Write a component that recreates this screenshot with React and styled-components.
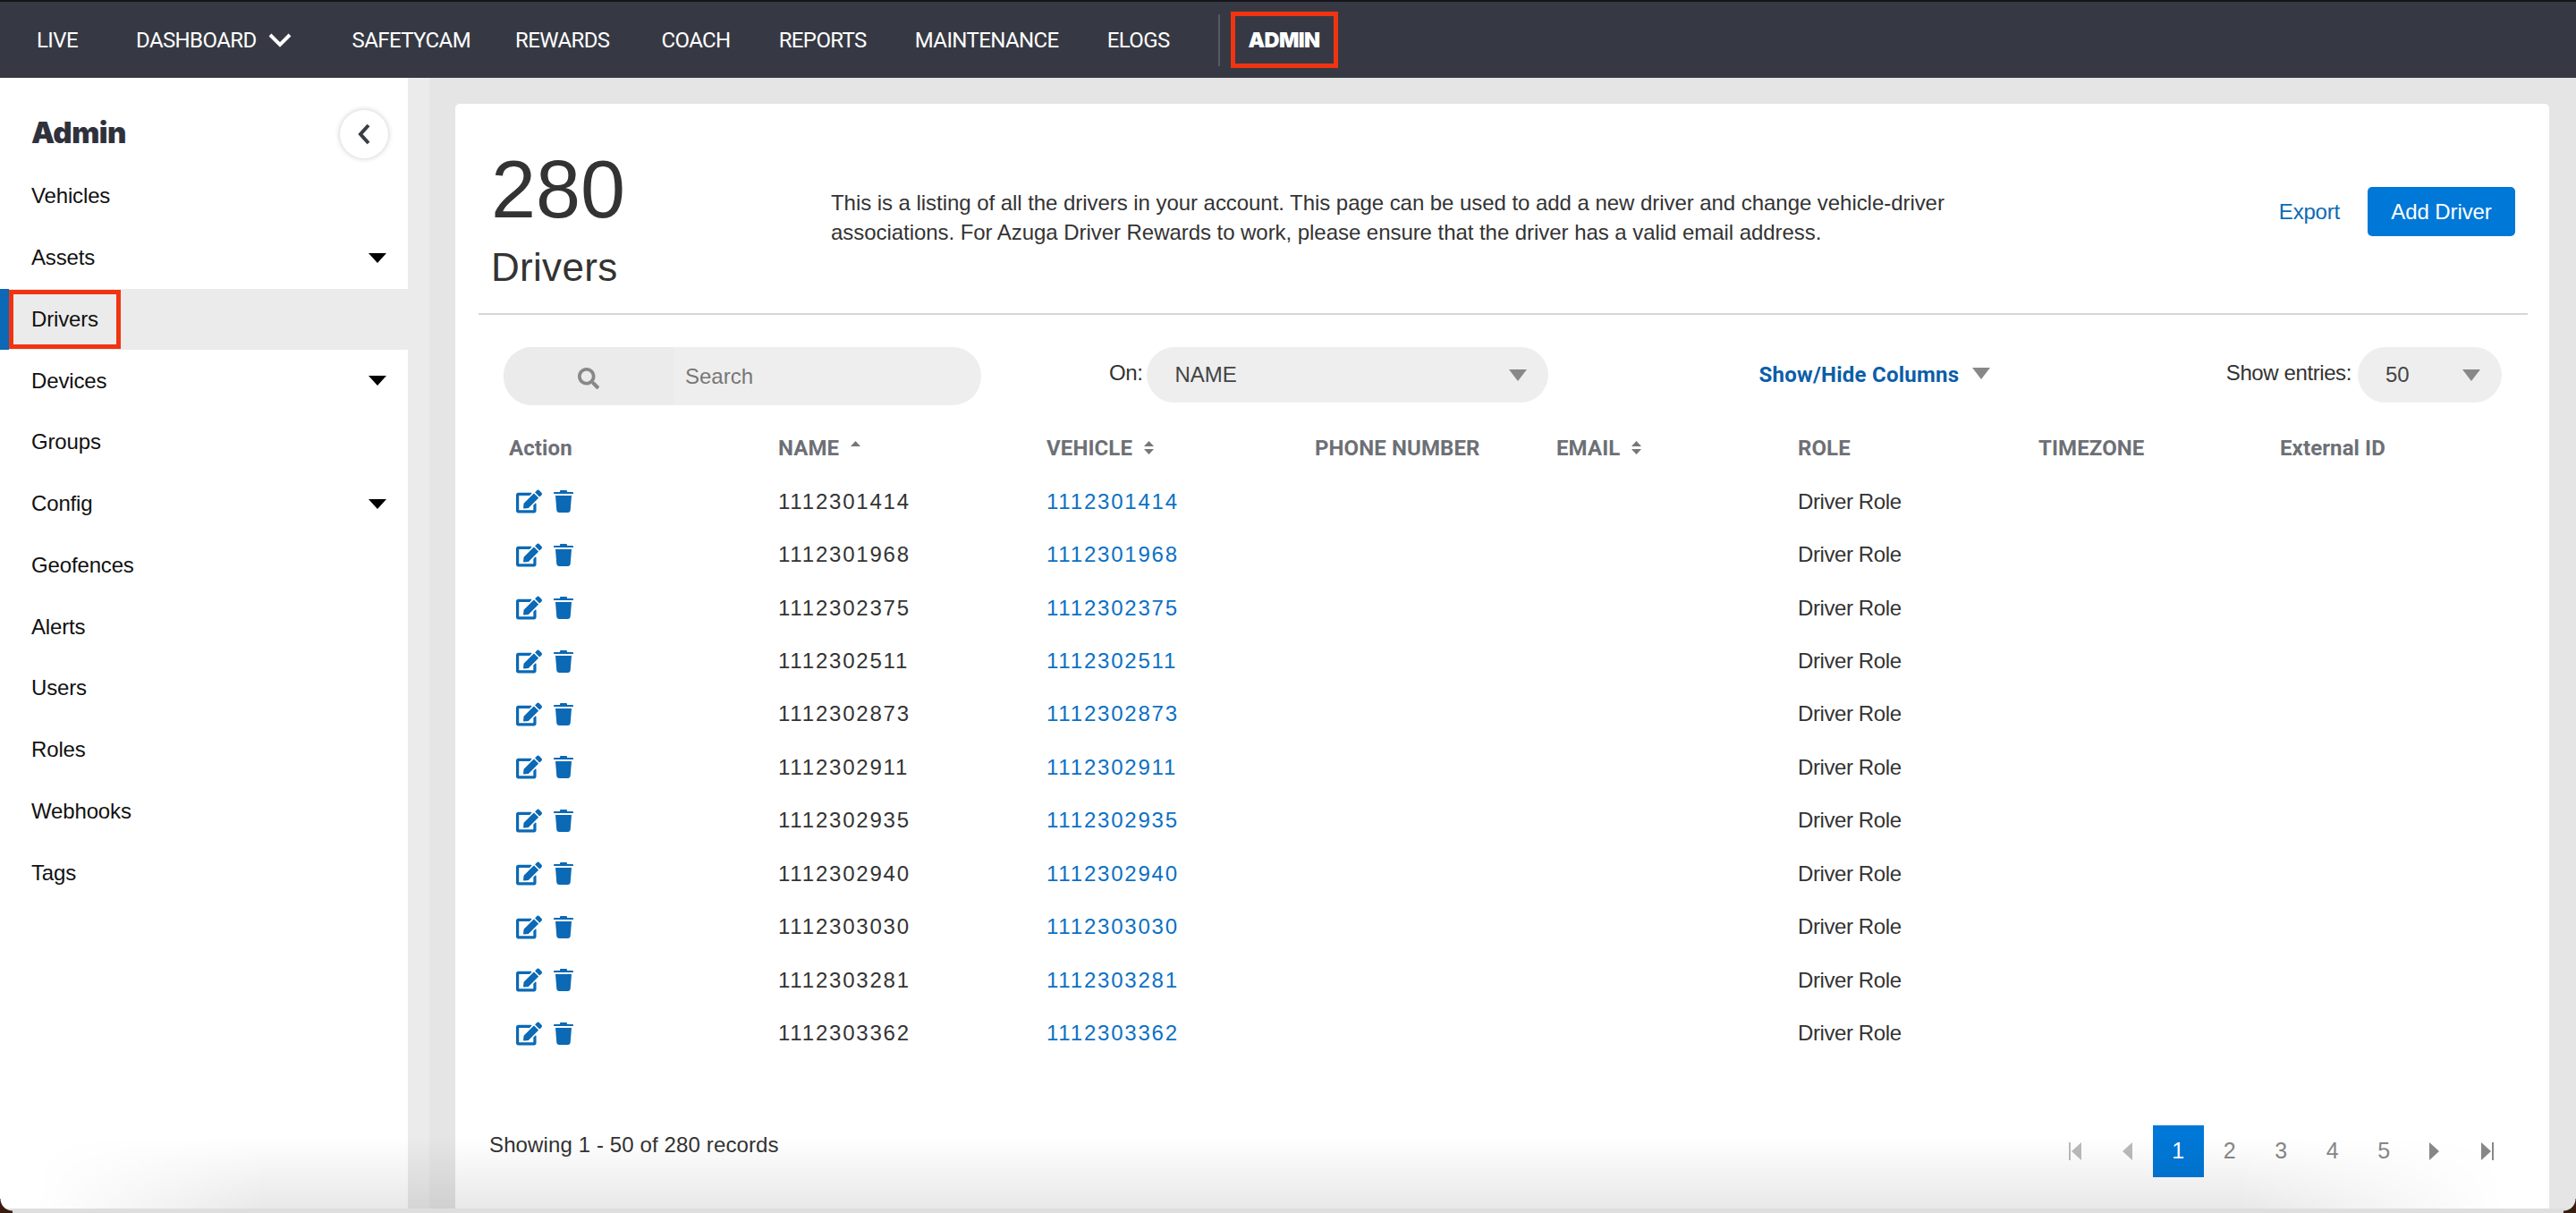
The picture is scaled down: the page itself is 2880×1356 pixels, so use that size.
import React from 'react';
import styled, { createGlobalStyle } from 'styled-components';
import { FaEdit, FaSearch } from 'react-icons/fa';

const GlobalStyle = createGlobalStyle`
  * { box-sizing: border-box; }
  html, body { margin: 0; padding: 0; }
  body {
    width: 2880px;
    height: 1356px;
    overflow: hidden;
    background: #e5e5e5;
    font-family: "Liberation Sans", Arial, sans-serif;
    color: #333;
  }
`;

const Page = styled.div`
  position: relative;
  width: 2880px;
  height: 1356px;
  display: flex;
  flex-direction: column;
  overflow: hidden;
`;

const TopBar = styled.nav`
  flex: none;
  height: 87px;
  display: flex;
  align-items: center;
  padding-left: 41px;
  background: #363943;
  border-top: 2px solid #15161a;
`;

const NavLink = styled.a`
  font-family: Roboto, sans-serif;
  font-size: 24px;
  letter-spacing: -0.6px;
  color: #fff;
  white-space: nowrap;
  margin-right: ${(p) => p.$gap}px;
  display: flex;
  align-items: center;
  gap: 13px;
`;

const NavDivider = styled.div`
  width: 2px;
  height: 58px;
  background: #565962;
`;

const AdminLink = styled.a`
  margin-left: 12px;
  width: 120px;
  height: 63px;
  border: 5px solid #f03412;
  display: flex;
  align-items: center;
  justify-content: center;
  font-family: Inter, sans-serif;
  font-weight: 900;
  font-size: 23.5px;
  letter-spacing: -0.6px;
  color: #fff;
`;

const Body = styled.div`
  flex: 1;
  display: flex;
  min-height: 0;
`;

const Sidebar = styled.aside`
  flex: none;
  width: 456px;
  background: #fff;
`;

const SideHead = styled.div`
  height: 98px;
  padding: 36px 22px 0 35px;
  display: flex;
  justify-content: space-between;
  align-items: flex-start;
`;

const SideTitle = styled.h2`
  margin: 5px 0 0;
  font-family: Inter, sans-serif;
  font-weight: 900;
  font-size: 33px;
  line-height: 40px;
  letter-spacing: -0.5px;
  color: #2f323c;
`;

const CollapseBtn = styled.button`
  width: 54px;
  height: 54px;
  padding: 0;
  border: none;
  border-radius: 50%;
  background: #fff;
  box-shadow: 0 0 6px rgba(0, 0, 0, 0.22);
  display: flex;
  align-items: center;
  justify-content: center;
`;

const SideItem = styled.div`
  position: relative;
  height: 68.75px;
  display: flex;
  align-items: center;
  justify-content: space-between;
  padding: 0 24px 0 ${(p) => (p.$active ? 25 : 35)}px;
  font-size: 24px;
  letter-spacing: -0.15px;
  color: #111;
  background: ${(p) => (p.$active ? '#ebebeb' : 'transparent')};
  border-left: ${(p) => (p.$active ? '10px solid #0b69b5' : 'none')};
`;

const ActiveMark = styled.span`
  position: absolute;
  left: 0;
  top: 1px;
  width: 125px;
  height: 66px;
  border: 5px solid #f03412;
`;

const DownArrow = styled.span`
  width: 0;
  height: 0;
  border-left: 10px solid transparent;
  border-right: 10px solid transparent;
  border-top: 11px solid #000;
`;

const Main = styled.main`
  flex: 1;
  min-width: 0;
  display: flex;
  padding: 29px 30px 0 29px;
  background: #e5e5e5;
  border-left: 24px solid #ebebeb;
`;

const Card = styled.section`
  flex: 1;
  background: #fff;
  border-radius: 5px 5px 0 0;
  display: flex;
  flex-direction: column;
`;

const CardHead = styled.header`
  flex: none;
  height: 236px;
  margin: 0 24px 0 26px;
  padding: 0 14px;
  display: flex;
  border-bottom: 2px solid #d6d6d6;
`;

const TitleBlock = styled.div`
  flex: none;
  width: 380px;
  padding-top: 54px;
`;

const Count = styled.div`
  font-size: 90px;
  line-height: 84px;
  color: #333;
`;

const CountLabel = styled.div`
  font-size: 44px;
  line-height: 50px;
  letter-spacing: 0.3px;
  margin-top: 20px;
  color: #333;
`;

const Description = styled.p`
  margin: 94px 0 0;
  width: 1300px;
  font-size: 24px;
  line-height: 33px;
  letter-spacing: -0.05px;
  color: #333;
`;

const HeadActions = styled.div`
  margin-left: auto;
  padding-top: 93px;
  display: flex;
  align-items: flex-start;
  gap: 31px;
`;

const ExportLink = styled.a`
  line-height: 55px;
  font-size: 24px;
  letter-spacing: -0.2px;
  color: #0b69b5;
`;

const AddButton = styled.button`
  width: 165px;
  height: 55px;
  border: none;
  border-radius: 5px;
  background: #0078d7;
  color: #fff;
  font-family: inherit;
  font-size: 24px;
  letter-spacing: -0.1px;
`;

const Toolbar = styled.div`
  flex: none;
  margin-top: 36px;
  padding: 0 53px 0 54px;
  display: flex;
  align-items: flex-start;
`;

const SearchBox = styled.div`
  width: 534px;
  height: 65px;
  border-radius: 32px;
  background: #eee;
  display: flex;
  overflow: hidden;
`;

const SearchIcon = styled.div`
  width: 190px;
  background: #ebebeb;
  display: flex;
  align-items: center;
  justify-content: center;
  color: #888;
  padding-top: 4px;
`;

const SearchText = styled.span`
  align-self: center;
  margin-left: 13px;
  font-size: 24px;
  color: #777;
`;

const FieldLabel = styled.span`
  margin: ${(p) => p.$margin};
  line-height: 58px;
  font-size: 24px;
  letter-spacing: -0.4px;
  color: #333;
`;

const SelectBox = styled.div`
  width: ${(p) => p.$width}px;
  height: 62px;
  margin-left: ${(p) => p.$gap}px;
  padding: 0 24px 0 31px;
  border-radius: 31px;
  background: #eee;
  display: flex;
  align-items: center;
  justify-content: space-between;
  font-size: 24px;
  color: #444;
`;

const GrayArrow = styled.span`
  flex: none;
  width: 0;
  height: 0;
  border-left: 10px solid transparent;
  border-right: 10px solid transparent;
  border-top: 13px solid #888;
  margin-top: ${(p) => (p.$lift ? '-3px' : '0')};
`;

const ColumnsToggle = styled.a`
  margin-left: 235px;
  height: 62px;
  display: flex;
  align-items: center;
  gap: 15px;
  font-family: Roboto, sans-serif;
  font-weight: 700;
  font-size: 24px;
  letter-spacing: 0.25px;
  color: #0b5ea8;
`;

const EntriesGroup = styled.div`
  margin-left: auto;
  display: flex;
`;

const TableHead = styled.div`
  display: grid;
  grid-template-columns: 301px 300px 300px 270px 270px 269px 270px 1fr;
  margin-top: 17px;
  padding-left: 60px;
  height: 61px;
  align-items: center;
`;

const HeadCell = styled.div`
  display: flex;
  align-items: center;
  gap: 13px;
  font-family: Roboto, sans-serif;
  font-weight: 700;
  font-size: 24px;
  letter-spacing: 0.1px;
  color: #6d7076;
`;

const Row = styled.div`
  display: grid;
  grid-template-columns: 301px 300px 300px 270px 270px 269px 270px 1fr;
  padding-left: 60px;
  height: 59.45px;
  align-items: center;
  font-size: 24px;
  color: #333;
`;

const ActionCell = styled.div`
  display: flex;
  align-items: center;
  gap: 13px;
  padding-left: 8px;
  color: #0b69b5;
  svg { display: block; }
`;

const NumberCell = styled.div`
  letter-spacing: 1.8px;
`;

const VehicleLink = styled.a`
  letter-spacing: 1.8px;
  color: #0b70c4;
`;

const RoleCell = styled.div`
  grid-column: 6;
  letter-spacing: -0.4px;
`;

const Footer = styled.div`
  margin-top: 73px;
  padding: 0 54px 0 38px;
  display: flex;
  justify-content: space-between;
  align-items: flex-start;
`;

const Records = styled.div`
  padding-top: 8px;
  font-size: 24px;
  letter-spacing: 0.12px;
  color: #333;
`;

const Pager = styled.div`
  display: flex;
  margin-right: -13px;
`;

const PageCell = styled.span`
  width: 57.5px;
  height: 58px;
  display: flex;
  align-items: center;
  justify-content: center;
  font-size: 25px;
  color: ${(p) => (p.$active ? '#fff' : '#888')};
  background: ${(p) => (p.$active ? '#0078d7' : 'transparent')};
`;

const BottomFade = styled.div`
  position: absolute;
  left: 0;
  right: 0;
  bottom: 5px;
  height: 80px;
  pointer-events: none;
  background: linear-gradient(rgba(0, 0, 0, 0), rgba(0, 0, 0, 0.09));
  mask-image: linear-gradient(to right, transparent 40px, #000 300px, #000 2500px, transparent 2800px);
`;

const BottomEdge = styled.div`
  position: absolute;
  left: 0;
  right: 0;
  bottom: 0;
  height: 5px;
  background: #dedede;
  pointer-events: none;
`;

const Corner = styled.div`
  position: absolute;
  bottom: 0;
  ${(p) => p.$side}: 0;
  width: 14px;
  height: 16px;
  pointer-events: none;
  background: radial-gradient(circle at ${(p) => (p.$side === 'left' ? '14px 0' : '0 0')}, transparent 13px, #3a1c10 14px);
`;

const TrashIcon = () => (
  <svg width="22" height="25" viewBox="0 0 22 25" fill="currentColor">
    <path d="M8 0h6a1 1 0 0 1 1 1v1h6a1 1 0 0 1 1 1v1H0V3a1 1 0 0 1 1-1h6V1a1 1 0 0 1 1-1z" />
    <path d="M2 6h18l-1.3 16.5A2.7 2.7 0 0 1 16 25H6a2.7 2.7 0 0 1-2.7-2.5z" />
  </svg>
);

const SortIcon = ({ up, down }) => (
  <svg width="11" height="15" viewBox="0 0 11 15" fill="#777">
    {up && <path d="M5.5 0 11 6H0z" />}
    {down && <path d="M5.5 15 0 9h11z" />}
  </svg>
);

const PagerIcon = ({ dir, bar, color }) => (
  <svg width="15" height="20" viewBox="0 0 15 20" fill={color}>
    {dir === 'left' ? <path d="M14 0v20L3 10z" /> : <path d="M1 0v20l11-10z" />}
    {bar && <rect x={dir === 'left' ? 0 : 13} y="0" width="2" height="20" />}
  </svg>
);

const navItems = [
  { label: 'LIVE', gap: 65 },
  { label: 'DASHBOARD', gap: 68, chevron: true },
  { label: 'SAFETYCAM', gap: 50 },
  { label: 'REWARDS', gap: 58 },
  { label: 'COACH', gap: 54 },
  { label: 'REPORTS', gap: 54 },
  { label: 'MAINTENANCE', gap: 54 },
  { label: 'ELOGS', gap: 54 },
];

const sideItems = [
  { label: 'Vehicles' },
  { label: 'Assets', arrow: true },
  { label: 'Drivers', active: true },
  { label: 'Devices', arrow: true },
  { label: 'Groups' },
  { label: 'Config', arrow: true },
  { label: 'Geofences' },
  { label: 'Alerts' },
  { label: 'Users' },
  { label: 'Roles' },
  { label: 'Webhooks' },
  { label: 'Tags' },
];

const drivers = [
  '1112301414', '1112301968', '1112302375', '1112302511', '1112302873', '1112302911',
  '1112302935', '1112302940', '1112303030', '1112303281', '1112303362',
];

export default function App() {
  return (
    <Page>
      <GlobalStyle />
      <TopBar>
        {navItems.map((item) => (
          <NavLink key={item.label} $gap={item.gap}>
            {item.label}
            {item.chevron && (
              <svg width="26" height="16" viewBox="0 0 26 16" fill="none" stroke="#fff" strokeWidth="4">
                <path d="M2 2l11 11L24 2" />
              </svg>
            )}
          </NavLink>
        ))}
        <NavDivider />
        <AdminLink>ADMIN</AdminLink>
      </TopBar>
      <Body>
        <Sidebar>
          <SideHead>
            <SideTitle>Admin</SideTitle>
            <CollapseBtn aria-label="Collapse">
              <svg width="14" height="24" viewBox="0 0 14 24" fill="none" stroke="#3a3d47" strokeWidth="4">
                <path d="M12 2 3 12l9 10" />
              </svg>
            </CollapseBtn>
          </SideHead>
          {sideItems.map((item) => (
            <SideItem key={item.label} $active={item.active}>
              {item.label}
              {item.arrow && <DownArrow />}
              {item.active && <ActiveMark />}
            </SideItem>
          ))}
        </Sidebar>
        <Main>
          <Card>
            <CardHead>
              <TitleBlock>
                <Count>280</Count>
                <CountLabel>Drivers</CountLabel>
              </TitleBlock>
              <Description>
                This is a listing of all the drivers in your account. This page can be used to add a new driver and change vehicle-driver associations. For Azuga Driver Rewards to work, please ensure that the driver has a valid email address.
              </Description>
              <HeadActions>
                <ExportLink>Export</ExportLink>
                <AddButton>Add Driver</AddButton>
              </HeadActions>
            </CardHead>
            <Toolbar>
              <SearchBox>
                <SearchIcon>
                  <FaSearch size={24} />
                </SearchIcon>
                <SearchText>Search</SearchText>
              </SearchBox>
              <FieldLabel $margin="0 0 0 143px">On:</FieldLabel>
              <SelectBox $width={449} $gap={5}>
                NAME
                <GrayArrow />
              </SelectBox>
              <ColumnsToggle>
                Show/Hide Columns
                <GrayArrow $lift />
              </ColumnsToggle>
              <EntriesGroup>
                <FieldLabel>Show entries:</FieldLabel>
                <SelectBox $width={161} $gap={7}>
                  50
                  <GrayArrow />
                </SelectBox>
              </EntriesGroup>
            </Toolbar>
            <TableHead>
              <HeadCell>Action</HeadCell>
              <HeadCell>NAME <SortIcon up /></HeadCell>
              <HeadCell>VEHICLE <SortIcon up down /></HeadCell>
              <HeadCell>PHONE NUMBER</HeadCell>
              <HeadCell>EMAIL <SortIcon up down /></HeadCell>
              <HeadCell>ROLE</HeadCell>
              <HeadCell>TIMEZONE</HeadCell>
              <HeadCell>External ID</HeadCell>
            </TableHead>
            {drivers.map((id) => (
              <Row key={id}>
                <ActionCell>
                  <FaEdit size={29} />
                  <TrashIcon />
                </ActionCell>
                <NumberCell>{id}</NumberCell>
                <VehicleLink>{id}</VehicleLink>
                <RoleCell>Driver Role</RoleCell>
              </Row>
            ))}
            <Footer>
              <Records>Showing 1 - 50 of 280 records</Records>
              <Pager>
                <PageCell><PagerIcon dir="left" bar color="#bbb" /></PageCell>
                <PageCell><PagerIcon dir="left" color="#bbb" /></PageCell>
                <PageCell $active>1</PageCell>
                <PageCell>2</PageCell>
                <PageCell>3</PageCell>
                <PageCell>4</PageCell>
                <PageCell>5</PageCell>
                <PageCell><PagerIcon dir="right" color="#888" /></PageCell>
                <PageCell><PagerIcon dir="right" bar color="#888" /></PageCell>
              </Pager>
            </Footer>
          </Card>
        </Main>
      </Body>
      <BottomFade />
      <BottomEdge />
      <Corner $side="left" />
      <Corner $side="right" />
    </Page>
  );
}
